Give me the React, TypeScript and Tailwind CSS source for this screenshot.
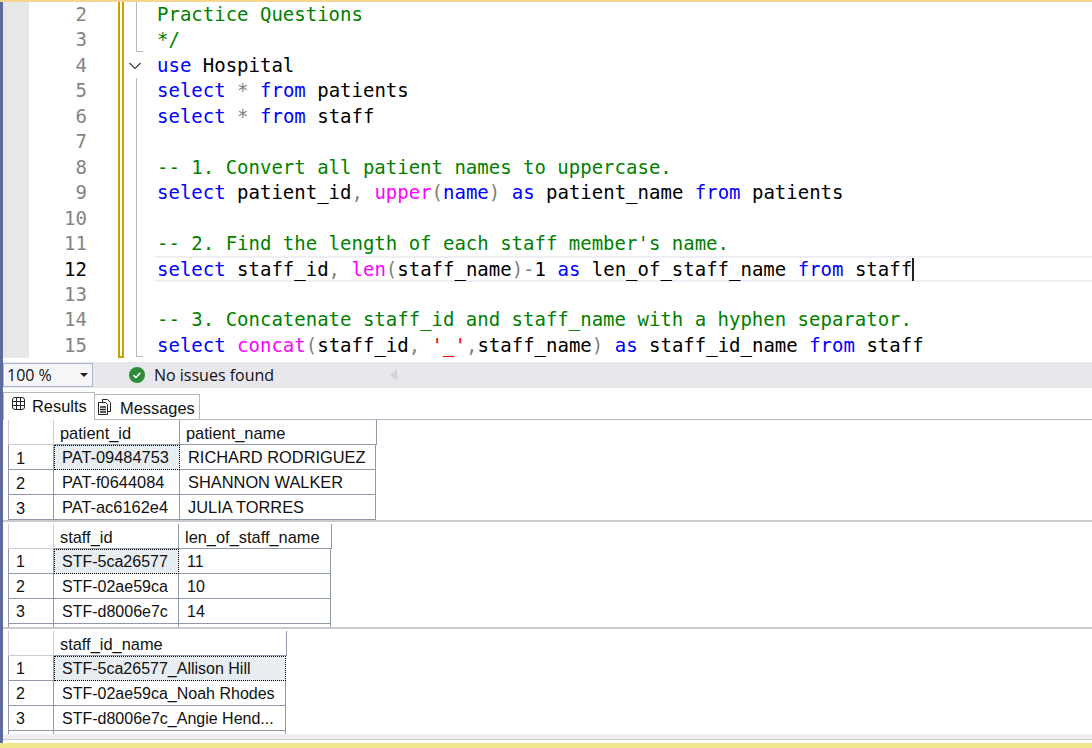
import { ReactNode } from 'react';

type Tok = [string, 'k' | 'f' | 'c' | 'o' | 's' | 't'];

const tokColor = {
  k: 'text-[#0000ff]',
  f: 'text-[#ff00ff]',
  c: 'text-[#008000]',
  o: 'text-[#808080]',
  s: 'text-[#ff0000]',
  t: 'text-black',
};

const lines: { n: number; fold: 'line' | 'end' | 'chevron' | 'last'; toks: Tok[] }[] = [
  { n: 2, fold: 'line', toks: [['Practice Questions', 'c']] },
  { n: 3, fold: 'end', toks: [['*/', 'c']] },
  { n: 4, fold: 'chevron', toks: [['use', 'k'], [' Hospital', 't']] },
  { n: 5, fold: 'line', toks: [['select', 'k'], [' ', 't'], ['*', 'o'], [' ', 't'], ['from', 'k'], [' patients', 't']] },
  { n: 6, fold: 'line', toks: [['select', 'k'], [' ', 't'], ['*', 'o'], [' ', 't'], ['from', 'k'], [' staff', 't']] },
  { n: 7, fold: 'line', toks: [] },
  { n: 8, fold: 'line', toks: [['-- 1. Convert all patient names to uppercase.', 'c']] },
  {
    n: 9,
    fold: 'line',
    toks: [['select', 'k'], [' patient_id', 't'], [',', 'o'], [' ', 't'], ['upper', 'f'], ['(', 'o'], ['name', 'k'], [')', 'o'], [' ', 't'], ['as', 'k'], [' patient_name ', 't'], ['from', 'k'], [' patients', 't']],
  },
  { n: 10, fold: 'line', toks: [] },
  { n: 11, fold: 'line', toks: [["-- 2. Find the length of each staff member's name.", 'c']] },
  {
    n: 12,
    fold: 'line',
    toks: [['select', 'k'], [' staff_id', 't'], [',', 'o'], [' ', 't'], ['len', 'f'], ['(', 'o'], ['staff_name', 't'], [')-', 'o'], ['1 ', 't'], ['as', 'k'], [' len_of_staff_name ', 't'], ['from', 'k'], [' staff', 't']],
  },
  { n: 13, fold: 'line', toks: [] },
  { n: 14, fold: 'line', toks: [['-- 3. Concatenate staff_id and staff_name with a hyphen separator.', 'c']] },
  {
    n: 15,
    fold: 'last',
    toks: [['select', 'k'], [' ', 't'], ['concat', 'f'], ['(', 'o'], ['staff_id', 't'], [',', 'o'], [' ', 't'], ["'_'", 's'], [',', 'o'], ['staff_name', 't'], [')', 'o'], [' ', 't'], ['as', 'k'], [' staff_id_name ', 't'], ['from', 'k'], [' staff', 't']],
  },
];

function FoldCell({ kind }: { kind: string }) {
  if (kind === 'chevron') {
    return (
      <div className="w-[31px] shrink-0 flex items-center pl-[4px]">
        <svg width="14" height="10" viewBox="0 0 14 10" fill="none" stroke="#3c3c3c" strokeWidth="1.2">
          <path d="M1.5 2l5.5 5.5L12.5 2" />
        </svg>
      </div>
    );
  }
  if (kind === 'end' || kind === 'last') {
    return (
      <div className="w-[31px] shrink-0 pl-[12px]">
        <div className="w-[7px] h-[calc(100%-1px)] border-l border-b border-[#b8b8b8]" />
      </div>
    );
  }
  return (
    <div className="w-[31px] shrink-0 pl-[12px]">
      <div className="w-px h-full bg-[#b8b8b8]" />
    </div>
  );
}

function CodeLine({ line }: { line: (typeof lines)[number] }) {
  const active = line.n === 12;
  return (
    <div className="flex h-[25.45px]">
      <div className="w-[26px] shrink-0 bg-[#e6e7e8]" />
      <div
        className={`w-[58px] shrink-0 text-right ${active ? 'text-black leading-[27px]' : 'text-[#848484] leading-[25.5px]'}`}
      >
        {line.n}
      </div>
      <div className="w-[31px] shrink-0" />
      <div
        className={`w-[6px] shrink-0 border-x-2 border-[#c8a200] ${line.fold === 'last' ? 'border-b-2' : ''}`}
      />
      <FoldCell kind={line.fold} />
      <div
        className={`flex-1 whitespace-pre pl-[2px] border-y-2 ${active ? 'border-[#eeeef4] leading-[23px]' : 'border-transparent leading-[21px]'}`}
      >
        {line.toks.map((t, i) => (
          <span key={i} className={tokColor[t[1]]}>
            {t[0]}
          </span>
        ))}
        {active && <span className="inline-block w-0 h-[23px] align-top border-l-2 border-[#222]" />}
      </div>
    </div>
  );
}

function ResultsIcon() {
  return (
    <svg className="mb-[6px]" width="13" height="13" viewBox="0 0 13 13" fill="none" stroke="#222" strokeWidth="1">
      <rect x="0.5" y="0.5" width="12" height="12" rx="2.5" />
      <path d="M0.5 4.5h12M0.5 8.5h12M4.5 0.5v12M8.5 0.5v12" />
    </svg>
  );
}

function MessagesIcon() {
  return (
    <svg className="mb-[3px]" width="13" height="16" viewBox="0 0 13 16" fill="none" stroke="#222" strokeWidth="1">
      <path d="M4.5 3V0.5h5l3 3V12.5H10" />
      <path d="M0.5 3.5h7l2 2v10h-9z" fill="#fff" />
      <path d="M2 8h6M2 10.5h6M2 13h6" strokeWidth="1.6" />
    </svg>
  );
}

function Cell({ w, selected, children }: { w: string; selected?: boolean; children?: ReactNode }) {
  return (
    <div
      className={`${w} shrink-0 h-full whitespace-pre overflow-hidden pl-[8px] leading-[25px] border-r border-b ${
        selected ? 'bg-[#e8edf1] outline-1 outline-dotted outline-offset-[-1px] outline-black border-transparent' : 'border-[#8f99aa]'
      }`}
    >
      {children}
    </div>
  );
}

function ResultGrid({
  cols,
  headWidths,
  widths,
  rows,
  rowText,
  stub,
}: {
  cols: string[];
  headWidths: string[];
  widths: string[];
  rows: string[][];
  rowText: string;
  stub?: boolean;
}) {
  return (
    <div className="pl-[5px] bg-white">
      <div className="flex h-[25px] leading-[26px]">
        <div className="w-[46px] shrink-0 border-l border-r border-b border-[#c9ced6]" />
        {cols.map((c, i) => (
          <div key={c} className={`${headWidths[i]} shrink-0 pl-[6px] border-r border-b border-[#8f99aa]`}>
            {c}
          </div>
        ))}
      </div>
      {rows.map((row, r) => (
        <div key={r} className={`flex h-[25px] ${rowText}`}>
          <div className="w-[46px] shrink-0 pl-[7px] leading-[26px] border-l border-r border-b border-[#8f99aa]">{r + 1}</div>
          {row.map((v, i) => (
            <Cell key={i} w={widths[i]} selected={r === 0 && i === 0}>
              {v}
            </Cell>
          ))}
        </div>
      ))}
      {stub && (
        <div className="flex h-[3px]">
          <div className="w-[46px] shrink-0 border-x border-[#8f99aa]" />
          {widths.map((w, i) => (
            <div key={i} className={`${w} shrink-0 border-r border-[#8f99aa]`} />
          ))}
        </div>
      )}
    </div>
  );
}

export default function App() {
  return (
    <div className="h-[748px] w-[1092px] overflow-hidden flex flex-col bg-white font-['Liberation_Sans',Arial,sans-serif] text-[16.4px] text-[#111]">
      <div className="h-[2px] shrink-0 bg-[#f6d68f]" />
      <div className="flex-1 min-h-0 flex">
        <div className="w-[3px] shrink-0 bg-[#5d6b9f]" />
        <div className="flex-1 min-w-0 flex flex-col">
          {/* editor */}
          <div className="h-[360px] shrink-0 overflow-hidden font-['DejaVu_Sans_Mono',monospace] text-[19px]">
            {lines.map((l) => (
              <CodeLine key={l.n} line={l} />
            ))}
          </div>

          {/* zoom + status bar */}
          <div className="h-[26px] shrink-0 flex items-center bg-[#e7e7ec] font-['Open_Sans',sans-serif] text-[16px]">
            <div className="w-[90px] h-[24px] flex items-center justify-between pl-[3px] pr-[4px] bg-[#f6f6f9] border border-[#a9b8cc]">
              <span>100 %</span>
              <span className="w-0 h-0 border-x-[4px] border-x-transparent border-t-[4px] border-t-[#222]" />
            </div>
            <svg className="ml-[36px]" width="16" height="16" viewBox="0 0 16 16">
              <circle cx="8" cy="8" r="8" fill="#2e8b3a" />
              <path d="M4.5 8.2l2.4 2.4 4.4-4.8" fill="none" stroke="#fff" strokeWidth="1.6" />
            </svg>
            <span className="ml-[9px]">No issues found</span>
            <span className="ml-[116px] w-0 h-0 border-y-[6px] border-y-transparent border-r-[7px] border-r-[#d4d4da]" />
          </div>

          {/* result tabs */}
          <div className="h-[32px] shrink-0 flex items-end pt-[4px] border-b border-[#b4b8c0]">
            <div className="w-[92px] h-[28px] mb-[-1px] flex items-center gap-[7px] pl-[8px] bg-white border border-b-0 border-[#b4b8c0]">
              <ResultsIcon />
              <span>Results</span>
            </div>
            <div className="w-[105px] h-[25px] flex items-center gap-[9px] pl-[3px] pt-[3px] bg-white border border-l-0 border-b-0 border-[#b4b8c0]">
              <MessagesIcon />
              <span>Messages</span>
            </div>
          </div>

          {/* grids */}
          <div className="flex-1 min-h-0 overflow-hidden">
            <ResultGrid
              cols={['patient_id', 'patient_name']}
              headWidths={['w-[126px]', 'w-[197px]']}
              widths={['w-[126px]', 'w-[196px]']}
              rowText="text-[16.4px]"
              rows={[
                ['PAT-09484753', 'RICHARD RODRIGUEZ'],
                ['PAT-f0644084', 'SHANNON WALKER'],
                ['PAT-ac6162e4', 'JULIA TORRES'],
              ]}
            />
            <div className="h-[4px] bg-white border-t-2 border-[#c8cad0]" />
            <ResultGrid
              cols={['staff_id', 'len_of_staff_name']}
              headWidths={['w-[125px]', 'w-[153px]']}
              widths={['w-[125px]', 'w-[152px]']}
              rowText="text-[16px]"
              rows={[
                ['STF-5ca26577', '11'],
                ['STF-02ae59ca', '10'],
                ['STF-d8006e7c', '14'],
              ]}
              stub
            />
            <div className="h-[4px] bg-white border-t-2 border-[#c8cad0]" />
            <ResultGrid
              cols={['staff_id_name']}
              headWidths={['w-[233px]']}
              widths={['w-[232px]']}
              rowText="text-[16px]"
              rows={[
                ['STF-5ca26577_Allison Hill'],
                ['STF-02ae59ca_Noah Rhodes'],
                ['STF-d8006e7c_Angie Hend...'],
              ]}
              stub
            />
            <div className="h-[6px] bg-[#f0f0f2] border-b border-[#c8cad0]" />
          </div>
        </div>
      </div>
      <div className="h-[5px] shrink-0 bg-[#f0e68c]" />
    </div>
  );
}
